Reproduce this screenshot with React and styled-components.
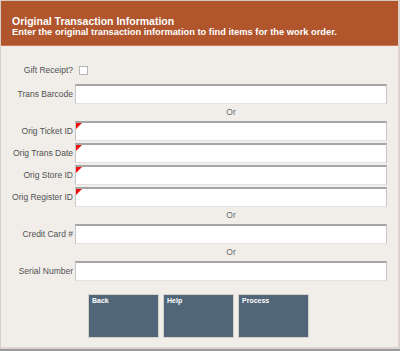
import React from 'react';
import styled, { createGlobalStyle } from 'styled-components';

const GlobalStyle = createGlobalStyle`
  html, body {
    margin: 0;
    padding: 0;
    background: #9a9a9a;
  }
  body {
    font-family: "Liberation Sans", Arial, sans-serif;
  }
`;

const Frame = styled.div`
  width: 400px;
  height: 349px;
  box-sizing: border-box;
  background: #f1eeea;
  border-top: 1px solid #d9c8bd;
  border-left: 1px solid #d8d0c8;
  border-right: 2px solid #ddd5cd;
  border-bottom: 2px solid #ddd5cd;
  display: flex;
  flex-direction: column;
`;

const Header = styled.div`
  height: 45px;
  box-sizing: border-box;
  background: #b0552c;
  border-bottom: 1px solid #c87a58;
  padding: 14px 0 0 11px;
  color: #ffffff;
  font-weight: bold;
`;

const Title = styled.div`
  font-size: 10.5px;
  line-height: 12px;
`;

const Subtitle = styled.div`
  font-size: 9.3px;
  line-height: 11px;
`;

const Form = styled.div`
  display: grid;
  grid-template-columns: 72px 312px;
  column-gap: 2px;
  padding-top: 19px;
`;

const Label = styled.div`
  font-size: 8.5px;
  color: #505050;
  text-align: right;
  align-self: center;
  margin-top: ${(p) => p.$mt || 0}px;
`;

const Field = styled.div`
  position: relative;
  height: 20px;
  box-sizing: border-box;
  background: #ffffff;
  border-top: 2px solid #a6a6a6;
  border-left: 1px solid #c6c6c6;
  border-right: 1px solid #c6c6c6;
  border-bottom: 1px solid #e2e2e2;
  margin-top: ${(p) => p.$mt || 0}px;
`;

const Required = styled.span`
  position: absolute;
  top: 0;
  left: 0;
  width: 0;
  height: 0;
  border-top: 6px solid #ee1111;
  border-right: 6px solid transparent;
`;

const CheckCell = styled.div`
  height: 10px;
  display: flex;
  align-items: center;
`;

const Checkbox = styled.div`
  width: 9px;
  height: 9px;
  margin-left: 4px;
  box-sizing: border-box;
  background: #ffffff;
  border: 1px solid #b5b5b5;
`;

const OrRow = styled.div`
  grid-column: 2;
  text-align: center;
  font-size: 8.5px;
  color: #666666;
  height: 17px;
  line-height: 17px;
`;

const Buttons = styled.div`
  display: flex;
  gap: 4px;
  padding: 13px 0 0 87px;
`;

const Button = styled.button`
  width: 71px;
  height: 44px;
  box-sizing: border-box;
  border: 1px solid #d6d0ca;
  background: #52667a;
  color: #ffffff;
  font-family: "Liberation Sans", Arial, sans-serif;
  font-size: 7px;
  font-weight: bold;
  text-align: left;
  padding: 2px 3px;
  display: flex;
  align-items: flex-start;
  margin: 0;
`;

const Row = ({ label, required, mt }) => (
  <>
    <Label $mt={mt}>{label}</Label>
    <Field $mt={mt}>{required && <Required />}</Field>
  </>
);

export default function App() {
  return (
    <>
      <GlobalStyle />
      <Frame>
        <Header>
          <Title>Original Transaction Information</Title>
          <Subtitle>Enter the original transaction information to find items for the work order.</Subtitle>
        </Header>
        <Form>
          <Label>Gift Receipt?</Label>
          <CheckCell>
            <Checkbox />
          </CheckCell>
          <Row label="Trans Barcode" mt={9} />
          <OrRow>Or</OrRow>
          <Row label="Orig Ticket ID" required />
          <Row label="Orig Trans Date" required mt={2} />
          <Row label="Orig Store ID" required mt={2} />
          <Row label="Orig Register ID" required mt={2} />
          <OrRow>Or</OrRow>
          <Row label="Credit Card #" />
          <OrRow>Or</OrRow>
          <Row label="Serial Number" />
        </Form>
        <Buttons>
          <Button>Back</Button>
          <Button>Help</Button>
          <Button>Process</Button>
        </Buttons>
      </Frame>
    </>
  );
}
